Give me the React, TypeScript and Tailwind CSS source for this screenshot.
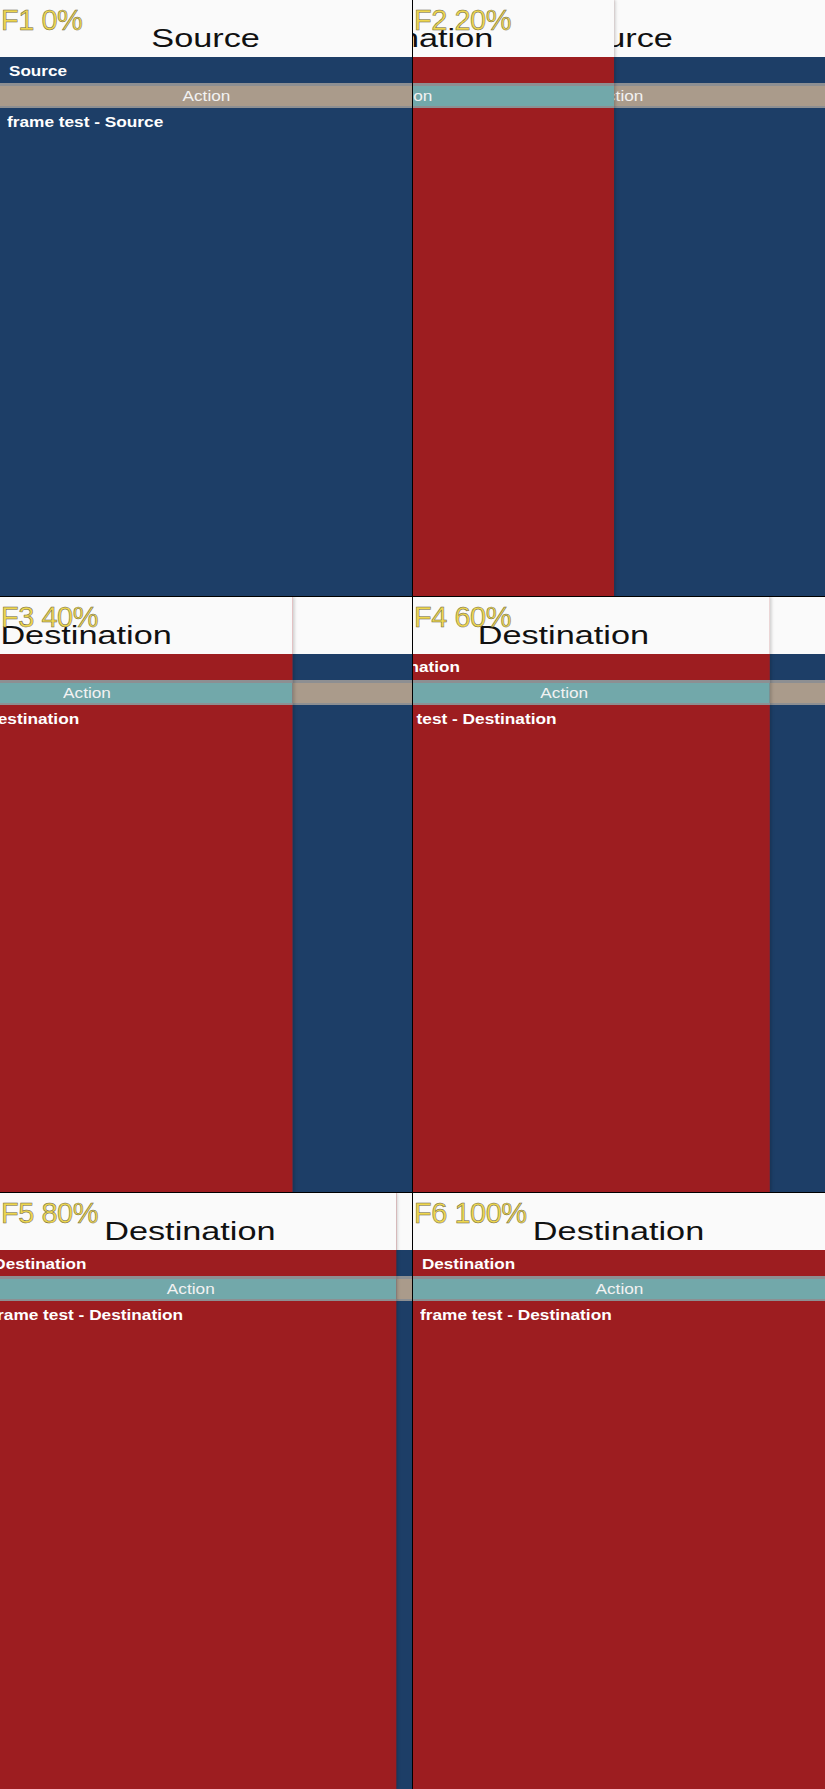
import React from 'react';

type Kind = 'source' | 'destination';

interface FrameSpec {
  label: string;
  // how far the destination page has slid in, 0..1 (null = not mounted yet)
  eased: number | null;
}

const frames: FrameSpec[] = [
  { label: 'F1 0%', eased: null },
  { label: 'F2 20%', eased: 0.488 },
  { label: 'F3 40%', eased: 0.71 },
  { label: 'F4 60%', eased: 0.866 },
  { label: 'F5 80%', eased: 0.962 },
  { label: 'F6 100%', eased: 1 },
];

const Page: React.FC<{ kind: Kind }> = ({ kind }) => {
  const title = kind === 'source' ? 'Source' : 'Destination';
  const isSource = kind === 'source';

  return (
    <div className={`flex h-full flex-col ${isSource ? 'bg-[#1d3e67]' : 'bg-[#9d1d20]'}`}>
      <div className="flex h-[57px] shrink-0 items-end justify-center bg-[#fafafa] pb-[6px]">
        <span className="inline-block scale-x-[1.37] text-[25px] leading-none text-[#111]">{title}</span>
      </div>
      <div className="flex h-[26px] shrink-0 items-center px-[9px]">
        <span className="inline-block origin-left scale-x-[1.14] text-[15px] font-bold leading-none text-white">
          {title}
        </span>
      </div>
      <div
        className={`flex h-[25px] shrink-0 items-center justify-center border-t-[3px] border-b-2 border-[#8d8f92] ${
          isSource ? 'bg-[#aa9b8b]' : 'bg-[#72a8aa]'
        }`}
      >
        <span className="inline-block scale-x-[1.23] text-[14px] leading-none text-[#f2f2f2]">Action</span>
      </div>
      <div className="px-[7px] pt-[2px]">
        <span className="inline-block origin-left scale-x-[1.15] text-[15px] font-bold leading-none text-white">
          frame test - {title}
        </span>
      </div>
    </div>
  );
};

const Frame: React.FC<{ spec: FrameSpec }> = ({ spec }) => {
  return (
    <div className="relative overflow-hidden bg-[#1d3e67]">
      <Page kind="source" />
      {spec.eased !== null && (
        <div
          className="absolute inset-0 shadow-[2px_0_3px_rgba(0,0,0,0.18)]"
          style={{ transform: `translateX(${-(1 - spec.eased) * 100}%)` }}
        >
          <Page kind="destination" />
        </div>
      )}
      <div className="absolute left-[1px] top-[6px] text-[29px] leading-none tracking-[-0.5px] text-[#efd74f] [-webkit-text-stroke:0.5px_#6a6545]">
        {spec.label}
      </div>
    </div>
  );
};

export default function App() {
  return (
    <div className="grid h-[1789px] w-[825px] grid-cols-2 grid-rows-3 gap-px bg-black font-['Liberation_Sans',Arial,sans-serif]">
      {frames.map((f) => (
        <Frame key={f.label} spec={f} />
      ))}
    </div>
  );
}
